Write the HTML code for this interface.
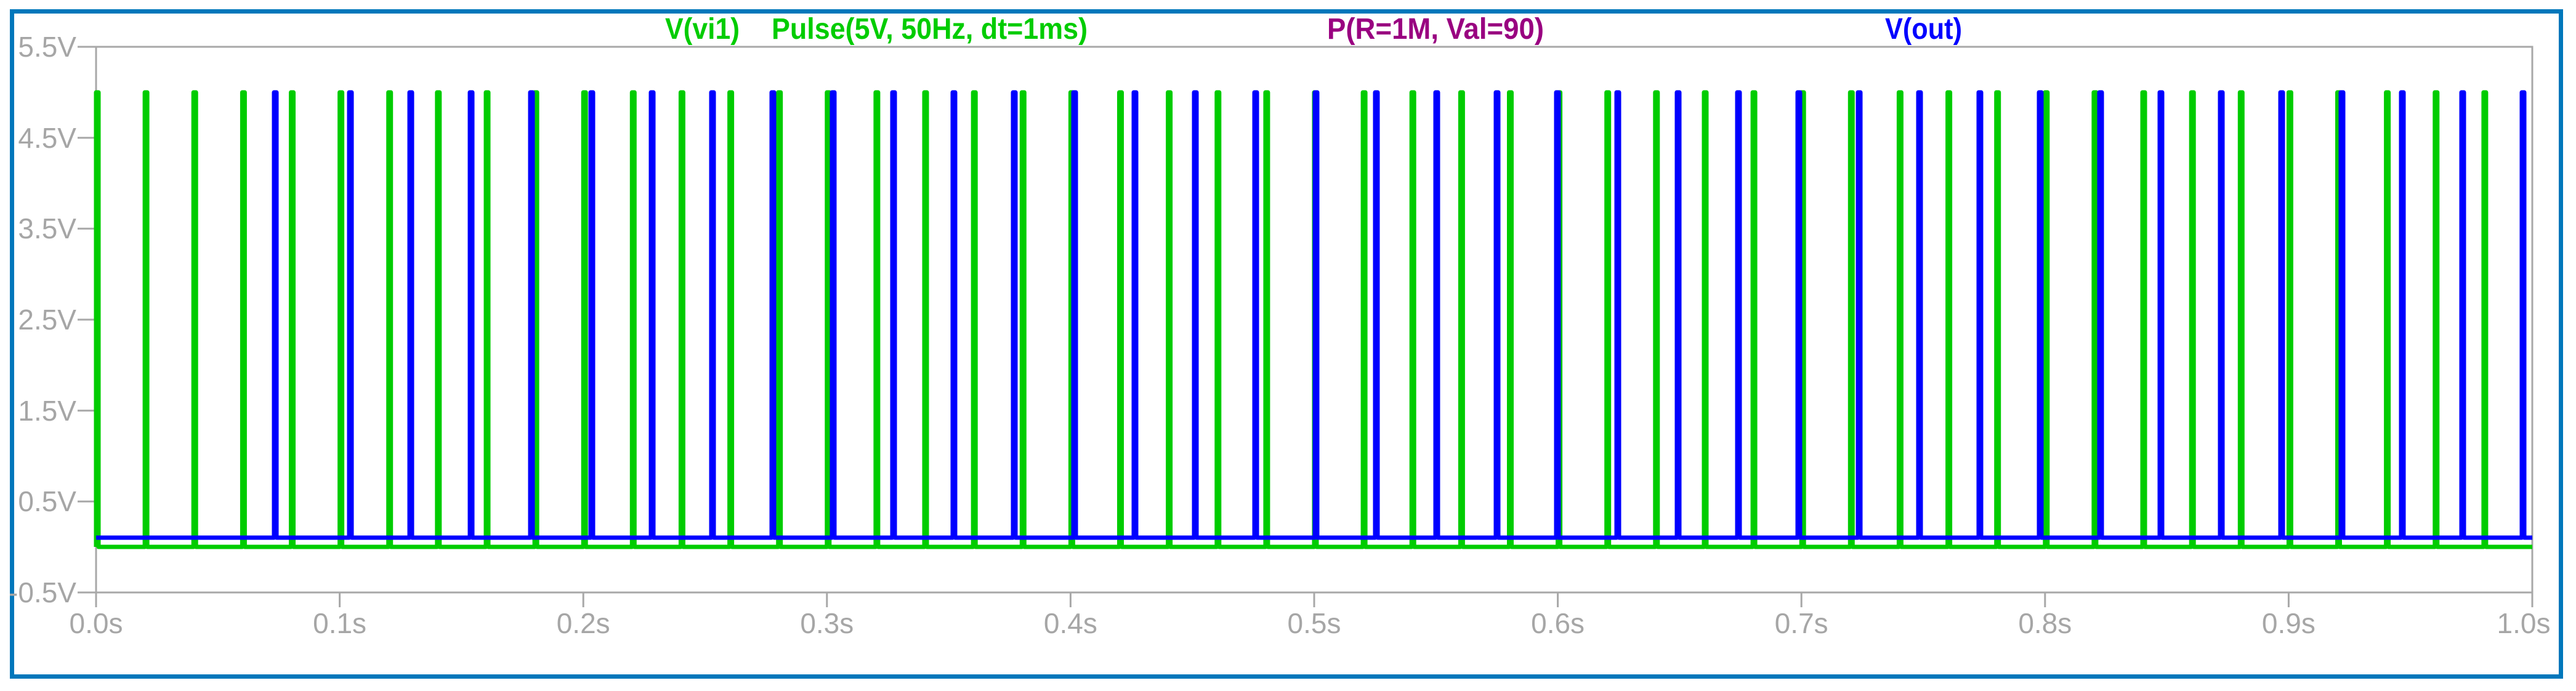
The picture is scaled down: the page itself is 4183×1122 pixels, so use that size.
<!DOCTYPE html>
<html><head><meta charset="utf-8"><style>
html,body{margin:0;padding:0;background:#fff;}
svg{display:block}
</style></head><body>
<svg width="4183" height="1122" viewBox="0 0 4183 1122" xmlns="http://www.w3.org/2000/svg">
<rect x="0" y="0" width="4183" height="1122" fill="#fff"/>
<rect x="19.5" y="18.5" width="4139" height="1080" fill="none" stroke="#0077bb" stroke-width="7"/>
<g font-family="'Liberation Sans',Arial,sans-serif" font-weight="bold" font-size="48">
<text x="1080" y="63" fill="#00cc00" textLength="121" lengthAdjust="spacingAndGlyphs">V(vi1)</text>
<text x="1253" y="63" fill="#00cc00" textLength="513" lengthAdjust="spacingAndGlyphs">Pulse(5V, 50Hz, dt=1ms)</text>
<text x="2155" y="63" fill="#990080" textLength="352" lengthAdjust="spacingAndGlyphs">P(R=1M, Val=90)</text>
<text x="3061" y="63" fill="#0000ff" textLength="125" lengthAdjust="spacingAndGlyphs">V(out)</text>
</g>
<g stroke="#a8a8a8" stroke-width="3" fill="none">
<rect x="156" y="76" width="3956" height="886"/>
<path d="M126,76H156M126,223.7H156M126,371.3H156M126,519H156M126,666.7H156M126,814.3H156M126,962H156"/>
<path d="M156,962V986M551.6,962V986M947.2,962V986M1342.8,962V986M1738.4,962V986M2134,962V986M2529.6,962V986M2925.2,962V986M3320.8,962V986M3716.4,962V986M4112,962V986"/>
</g>
<g font-family="'Liberation Sans',Arial,sans-serif" font-size="46" fill="#a6a6a6" text-anchor="end">
<text x="124" y="92">5.5V</text>
<text x="124" y="240">4.5V</text>
<text x="124" y="387">3.5V</text>
<text x="124" y="535">2.5V</text>
<text x="124" y="683">1.5V</text>
<text x="124" y="830">0.5V</text>
<text x="124" y="978">-0.5V</text>
</g>
<g font-family="'Liberation Sans',Arial,sans-serif" font-size="46" fill="#a6a6a6" text-anchor="middle">
<text x="156" y="1028">0.0s</text>
<text x="551.6" y="1028">0.1s</text>
<text x="947.2" y="1028">0.2s</text>
<text x="1342.8" y="1028">0.3s</text>
<text x="1738.4" y="1028">0.4s</text>
<text x="2134" y="1028">0.5s</text>
<text x="2529.6" y="1028">0.6s</text>
<text x="2925.2" y="1028">0.7s</text>
<text x="3320.8" y="1028">0.8s</text>
<text x="3716.4" y="1028">0.9s</text>
<text x="4098" y="1028">1.0s</text>
</g>
<path id="g" fill="none" stroke="#00cc00" stroke-width="7" stroke-linejoin="round" d=""/>
<path id="b" fill="none" stroke="#0000ff" stroke-width="7" stroke-linejoin="round" d=""/>
</svg>
<script>
(function(){
var d="M156,888";
for(var k=0;k<50;k++){var x=156+k*79.12;d+="H"+x.toFixed(1)+"V150h4V888";}
d+="H4112";
document.getElementById("g").setAttribute("d",d);
var xs=[445];for(var k=0;k<=36;k++)xs.push(567+k*98);
var e="M156,873";
for(var i=0;i<xs.length;i++){e+="H"+xs[i]+"V150h4V873";}
e+="H4112";
document.getElementById("b").setAttribute("d",e);
})();
</script>
</body></html>
